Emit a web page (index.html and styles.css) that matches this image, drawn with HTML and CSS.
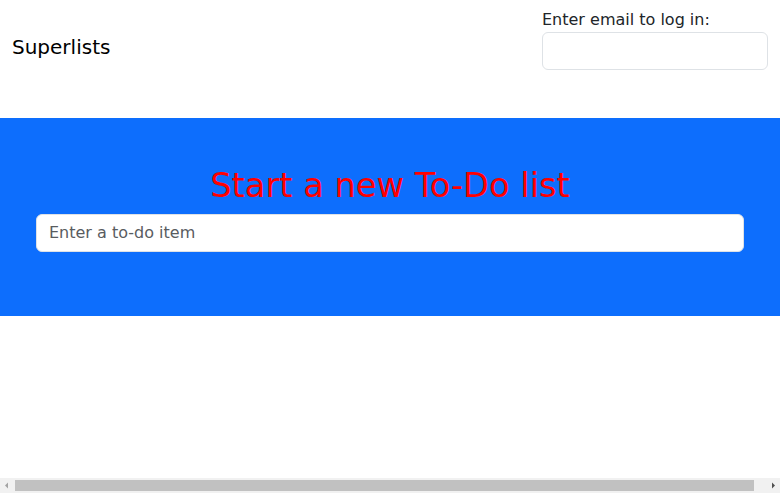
FILE: index.html
```html
<!DOCTYPE html>
<html lang="en">
<head>
<meta charset="utf-8">
<title>To-Do lists</title>
<link rel="stylesheet" href="styles.css">
</head>
<body>
  <nav class="navbar">
    <a class="brand" href="#">Superlists</a>
    <form class="login">
      <label class="login-label" for="email">Enter email to log in:</label>
      <input class="control login-input" id="email" type="email">
    </form>
  </nav>
  <div class="hero">
    <h1 class="hero-title">Start a new To-Do list</h1>
    <form class="item-form">
      <input class="control item-input" type="text" placeholder="Enter a to-do item">
    </form>
  </div>
  <div class="hscroll" aria-hidden="true">
    <svg class="hscroll-arrow" width="15" height="15" viewBox="0 0 15 15"><path d="M5 7.5 L8 4.5 L8 10.5 Z" fill="#a3a3a3"/></svg>
    <div class="hscroll-track"><div class="hscroll-thumb"></div></div>
    <svg class="hscroll-arrow" width="15" height="15" viewBox="0 0 15 15"><path d="M10 7.5 L7 4.5 L7 10.5 Z" fill="#505050"/></svg>
  </div>
</body>
</html>
```
FILE: styles.css
```css
* { box-sizing: border-box; }
html, body {
  margin: 0;
  padding: 0;
}
body {
  font-family: "DejaVu Sans", sans-serif;
  font-size: 16px;
  line-height: 1.5;
  color: #212529;
  background: #fff;
}
.navbar {
  display: flex;
  justify-content: space-between;
  align-items: center;
  padding: 8px 12px;
}
.brand {
  font-size: 20px;
  line-height: 30px;
  padding: 5px 0;
  color: #000;
  text-decoration: none;
}
.login {
  display: flex;
  flex-direction: column;
  margin: 0 0 16px;
}
.login-label {
  display: block;
  line-height: 24px;
}
.control {
  display: block;
  font-family: inherit;
  font-size: 16px;
  line-height: 24px;
  padding: 5px 12px 7px;
  color: #212529;
  background: #fff;
  border: 1px solid #dee2e6;
  border-radius: 6px;
  height: 38px;
  outline: none;
}
.control::placeholder { color: #595c5f; }
.login-input { width: 226px; }
.hero {
  margin: 24px -12px 0 -12px;
  padding: 48px;
  background: #0d6efd;
  text-align: center;
}
.hero-title {
  margin: 0 0 8px;
  font-size: 33.7px;
  line-height: 1.2;
  font-weight: 400;
  color: #ff0000;
}
.item-form { margin: 0 0 16px; }
.item-input { width: 100%; }

.hscroll {
  position: fixed;
  left: 0;
  right: 0;
  bottom: 0;
  height: 15px;
  display: flex;
  background: #f1f1f1;
}
.hscroll-arrow { flex: 0 0 15px; display: block; }
.hscroll-track {
  flex: 1;
  padding: 2px 11px 2px 0;
  display: flex;
}
.hscroll-thumb {
  flex: 1;
  background: #c1c1c1;
}
```
